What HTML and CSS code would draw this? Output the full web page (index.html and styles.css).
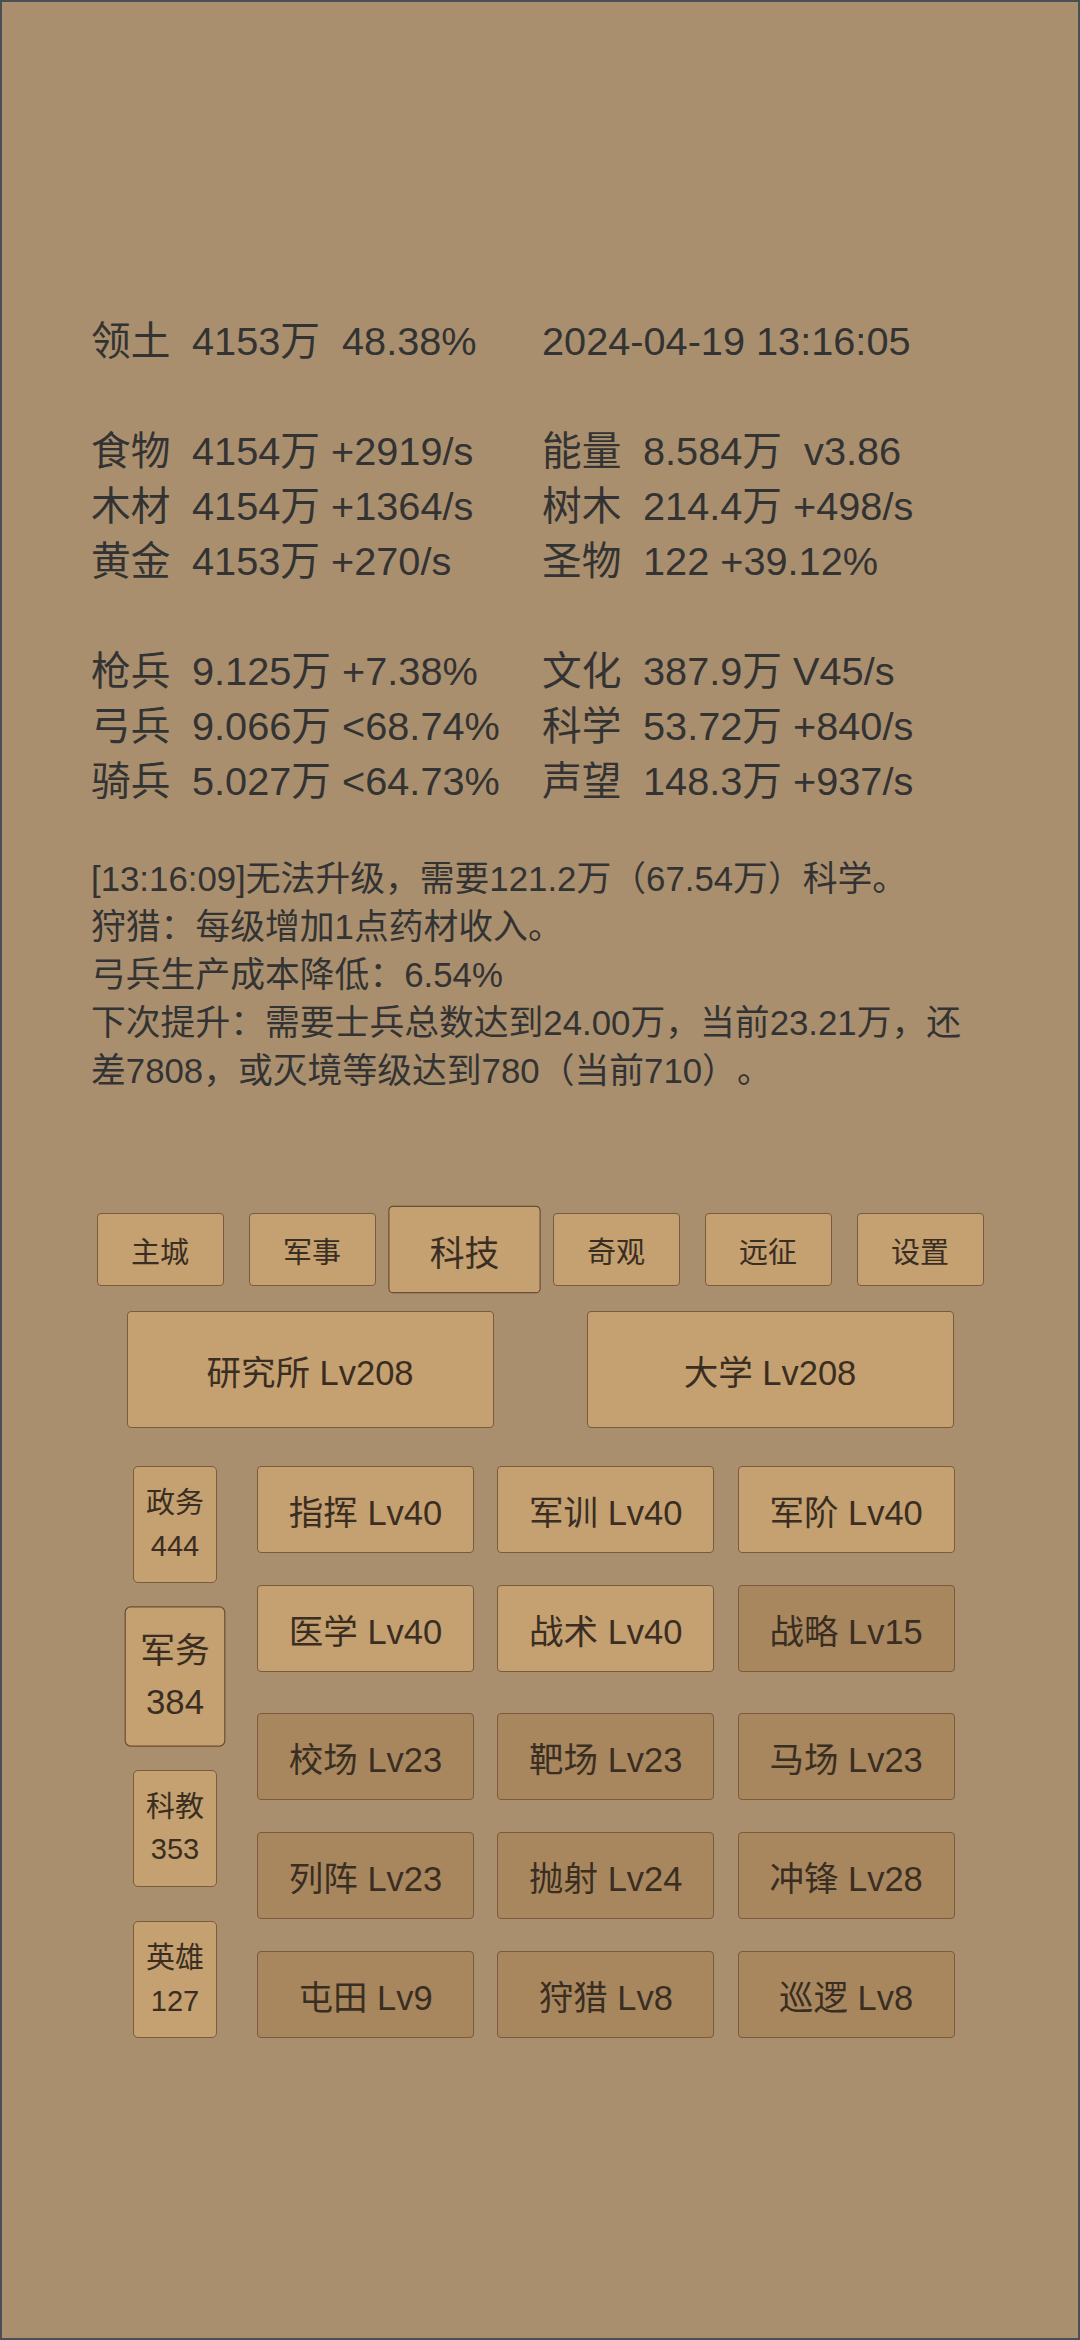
FILE: index.html
```html
<!DOCTYPE html>
<html lang="zh-CN">
<head>
<meta charset="utf-8">
<title>科技</title>
<link rel="stylesheet" href="styles.css">
</head>
<body>
<div class="page">
  <section class="stats">
    <div class="stat-row">
      <div class="stat"><span class="k">领土</span><span class="v">4153万  48.38%</span></div>
      <div class="stat"><span class="v">2024-04-19 13:16:05</span></div>
    </div>
    <div class="stat-row"></div>
    <div class="stat-row">
      <div class="stat"><span class="k">食物</span><span class="v">4154万 +2919/s</span></div>
      <div class="stat"><span class="k">能量</span><span class="v">8.584万  v3.86</span></div>
    </div>
    <div class="stat-row">
      <div class="stat"><span class="k">木材</span><span class="v">4154万 +1364/s</span></div>
      <div class="stat"><span class="k">树木</span><span class="v">214.4万 +498/s</span></div>
    </div>
    <div class="stat-row">
      <div class="stat"><span class="k">黄金</span><span class="v">4153万 +270/s</span></div>
      <div class="stat"><span class="k">圣物</span><span class="v">122 +39.12%</span></div>
    </div>
    <div class="stat-row"></div>
    <div class="stat-row">
      <div class="stat"><span class="k">枪兵</span><span class="v">9.125万 +7.38%</span></div>
      <div class="stat"><span class="k">文化</span><span class="v">387.9万 V45/s</span></div>
    </div>
    <div class="stat-row">
      <div class="stat"><span class="k">弓兵</span><span class="v">9.066万 &lt;68.74%</span></div>
      <div class="stat"><span class="k">科学</span><span class="v">53.72万 +840/s</span></div>
    </div>
    <div class="stat-row">
      <div class="stat"><span class="k">骑兵</span><span class="v">5.027万 &lt;64.73%</span></div>
      <div class="stat"><span class="k">声望</span><span class="v">148.3万 +937/s</span></div>
    </div>
  </section>

  <section class="log">
    <p class="log-line">[13:16:09]无法升级，需要121.2万（67.54万）科学。</p>
    <p class="log-line">狩猎：每级增加1点药材收入。</p>
    <p class="log-line">弓兵生产成本降低：6.54%</p>
    <p class="log-line">下次提升：需要士兵总数达到24.00万，当前23.21万，还<br>差7808，或灭境等级达到780（当前710）。</p>
  </section>

  <nav class="tabs">
    <div class="btn tab">主城</div>
    <div class="btn tab">军事</div>
    <div class="btn tab active">科技</div>
    <div class="btn tab">奇观</div>
    <div class="btn tab">远征</div>
    <div class="btn tab">设置</div>
  </nav>

  <section class="buildings">
    <div class="btn building">研究所 Lv208</div>
    <div class="btn building">大学 Lv208</div>
  </section>

  <section class="tech">
    <div class="branches">
      <div class="btn branch"><span>政务</span><span>444</span></div>
      <div class="btn branch active"><span>军务</span><span>384</span></div>
      <div class="btn branch"><span>科教</span><span>353</span></div>
      <div class="btn branch"><span>英雄</span><span>127</span></div>
    </div>
    <div class="tech-grid">
      <div class="tech-row">
        <div class="btn tech-item">指挥 Lv40</div>
        <div class="btn tech-item">军训 Lv40</div>
        <div class="btn tech-item">军阶 Lv40</div>
      </div>
      <div class="tech-row">
        <div class="btn tech-item">医学 Lv40</div>
        <div class="btn tech-item">战术 Lv40</div>
        <div class="btn tech-item dim">战略 Lv15</div>
      </div>
      <div class="tech-row group">
        <div class="btn tech-item dim">校场 Lv23</div>
        <div class="btn tech-item dim">靶场 Lv23</div>
        <div class="btn tech-item dim">马场 Lv23</div>
      </div>
      <div class="tech-row">
        <div class="btn tech-item dim">列阵 Lv23</div>
        <div class="btn tech-item dim">抛射 Lv24</div>
        <div class="btn tech-item dim">冲锋 Lv28</div>
      </div>
      <div class="tech-row">
        <div class="btn tech-item dim">屯田 Lv9</div>
        <div class="btn tech-item dim">狩猎 Lv8</div>
        <div class="btn tech-item dim">巡逻 Lv8</div>
      </div>
    </div>
  </section>
</div>
</body>
</html>
```

FILE: styles.css
```css
html, body {
  margin: 0;
  padding: 0;
}

.page {
  width: 1080px;
  height: 2340px;
  box-sizing: border-box;
  border: 2px solid #4a4f56;
  background: #a98f6e;
  padding: 312px 89px 0;
  font-family: "Liberation Sans", "Noto Sans CJK SC", sans-serif;
  color: #333;
  text-spacing-trim: space-all;
}

.stats {
  font-size: 39.7px;
  line-height: 55px;
}

.stat-row {
  display: grid;
  grid-template-columns: 451px 1fr;
  height: 55px;
}

.stat {
  display: flex;
  white-space: pre;
}

.stat .k {
  width: 101px;
  flex: none;
}

.log {
  margin-top: 46px;
  font-size: 34.8px;
  line-height: 48.1px;
}

.log-line {
  margin: 0;
}

.btn {
  box-sizing: border-box;
  display: flex;
  align-items: center;
  justify-content: center;
  background: #c5a070;
  border: 1px solid #7a5b3c;
  border-radius: 4px;
  color: #3a2e22;
}

.tabs {
  margin-top: 118px;
  display: flex;
  justify-content: center;
  gap: 25px;
}

.tab {
  width: 127px;
  height: 73px;
  font-size: 29px;
}

.tab.active {
  transform: scale(1.2);
  border-color: #6a4d32;
}

.buildings {
  margin-top: 25px;
  display: flex;
  justify-content: center;
  gap: 93px;
}

.building {
  width: 367px;
  height: 117px;
  font-size: 34.5px;
}

.tech {
  margin-top: 38px;
  margin-left: 42px;
  display: flex;
  gap: 40px;
}

.branches {
  width: 84px;
  display: flex;
  flex-direction: column;
  justify-content: space-between;
}

.branch {
  height: 117px;
  flex-direction: column;
  font-size: 29px;
  line-height: 42.7px;
  border-radius: 5px;
}

.branch.active {
  transform: scale(1.2);
  border-color: #6a4d32;
}

.tech-grid {
  display: flex;
  flex-direction: column;
  gap: 32px;
}

.tech-row {
  display: flex;
  gap: 23.3px;
}

.tech-row.group {
  margin-top: 9px;
}

.tech-item {
  width: 217px;
  height: 87px;
  font-size: 34.5px;
}

.tech-item.dim {
  background: #a8875e;
}
```
